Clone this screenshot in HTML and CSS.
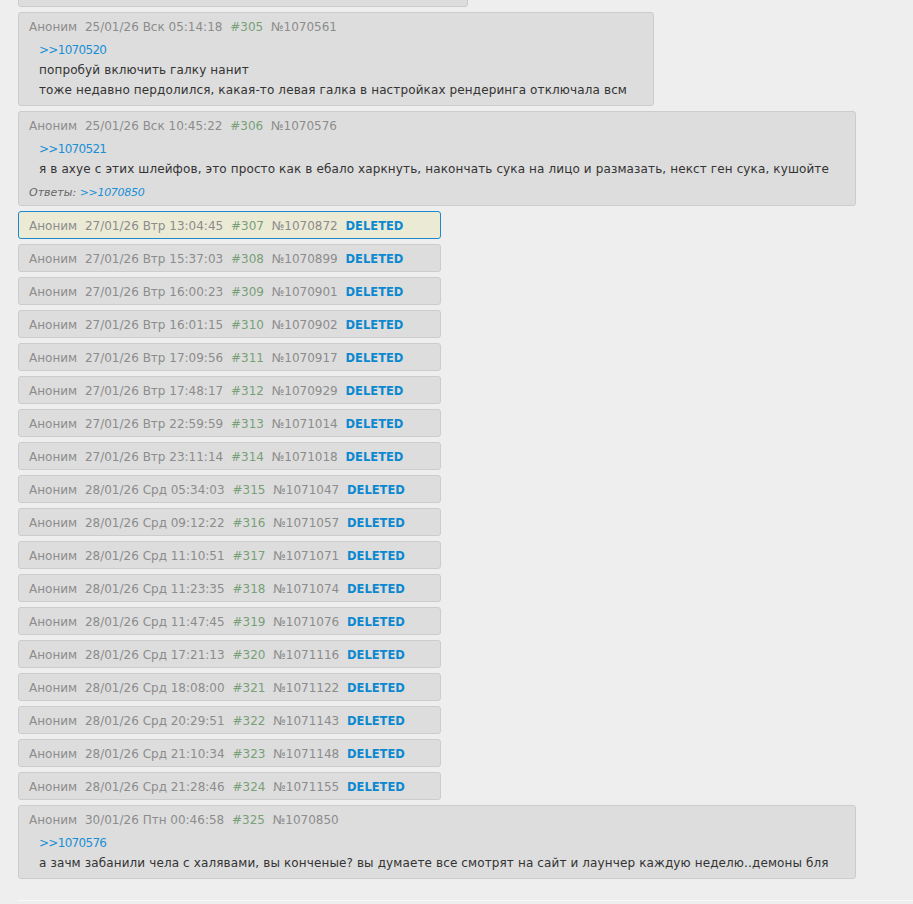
FILE: index.html
```html
<!DOCTYPE html>
<html lang="ru">
<head>
<meta charset="utf-8">
<title>Тред</title>
<link rel="stylesheet" href="styles.css">
</head>
<body>
<div class="thread">
  <div class="post post--prev">
    <div class="post__details"><span class="post__anon">Аноним</span></div>
  </div>

  <div class="post">
    <div class="post__details">
      <span class="post__anon">Аноним</span>
      <span class="post__time">25/01/26 Вск 05:14:18</span>
      <span class="post__reflink">#305</span>
      <span class="post__num">№1070561</span>
    </div>
    <div class="post__message">
      <a class="post__reply" href="#1070520">&gt;&gt;1070520</a><br>
      попробуй включить галку нанит<br>
      тоже недавно пердолился, какая-то левая галка в настройках рендеринга отключала всм
    </div>
  </div>

  <div class="post">
    <div class="post__details">
      <span class="post__anon">Аноним</span>
      <span class="post__time">25/01/26 Вск 10:45:22</span>
      <span class="post__reflink">#306</span>
      <span class="post__num">№1070576</span>
    </div>
    <div class="post__message">
      <a class="post__reply" href="#1070521">&gt;&gt;1070521</a><br>
      я в ахуе с этих шлейфов, это просто как в ебало харкнуть, накончать сука на лицо и размазать, некст ген сука, кушойте
    </div>
    <div class="post__refmap">Ответы: <a class="post__refmap-link" href="#1070850">&gt;&gt;1070850</a></div>
  </div>

  <div class="post post--deleted post--highlight">
    <div class="post__details">
      <span class="post__anon">Аноним</span>
      <span class="post__time">27/01/26 Втр 13:04:45</span>
      <span class="post__reflink">#307</span>
      <span class="post__num">№1070872</span>
      <span class="post__deleted">DELETED</span>
    </div>
  </div>
  <div class="post post--deleted">
    <div class="post__details"><span class="post__anon">Аноним</span> <span class="post__time">27/01/26 Втр 15:37:03</span> <span class="post__reflink">#308</span> <span class="post__num">№1070899</span> <span class="post__deleted">DELETED</span></div>
  </div>
  <div class="post post--deleted">
    <div class="post__details"><span class="post__anon">Аноним</span> <span class="post__time">27/01/26 Втр 16:00:23</span> <span class="post__reflink">#309</span> <span class="post__num">№1070901</span> <span class="post__deleted">DELETED</span></div>
  </div>
  <div class="post post--deleted">
    <div class="post__details"><span class="post__anon">Аноним</span> <span class="post__time">27/01/26 Втр 16:01:15</span> <span class="post__reflink">#310</span> <span class="post__num">№1070902</span> <span class="post__deleted">DELETED</span></div>
  </div>
  <div class="post post--deleted">
    <div class="post__details"><span class="post__anon">Аноним</span> <span class="post__time">27/01/26 Втр 17:09:56</span> <span class="post__reflink">#311</span> <span class="post__num">№1070917</span> <span class="post__deleted">DELETED</span></div>
  </div>
  <div class="post post--deleted">
    <div class="post__details"><span class="post__anon">Аноним</span> <span class="post__time">27/01/26 Втр 17:48:17</span> <span class="post__reflink">#312</span> <span class="post__num">№1070929</span> <span class="post__deleted">DELETED</span></div>
  </div>
  <div class="post post--deleted">
    <div class="post__details"><span class="post__anon">Аноним</span> <span class="post__time">27/01/26 Втр 22:59:59</span> <span class="post__reflink">#313</span> <span class="post__num">№1071014</span> <span class="post__deleted">DELETED</span></div>
  </div>
  <div class="post post--deleted">
    <div class="post__details"><span class="post__anon">Аноним</span> <span class="post__time">27/01/26 Втр 23:11:14</span> <span class="post__reflink">#314</span> <span class="post__num">№1071018</span> <span class="post__deleted">DELETED</span></div>
  </div>
  <div class="post post--deleted">
    <div class="post__details"><span class="post__anon">Аноним</span> <span class="post__time">28/01/26 Срд 05:34:03</span> <span class="post__reflink">#315</span> <span class="post__num">№1071047</span> <span class="post__deleted">DELETED</span></div>
  </div>
  <div class="post post--deleted">
    <div class="post__details"><span class="post__anon">Аноним</span> <span class="post__time">28/01/26 Срд 09:12:22</span> <span class="post__reflink">#316</span> <span class="post__num">№1071057</span> <span class="post__deleted">DELETED</span></div>
  </div>
  <div class="post post--deleted">
    <div class="post__details"><span class="post__anon">Аноним</span> <span class="post__time">28/01/26 Срд 11:10:51</span> <span class="post__reflink">#317</span> <span class="post__num">№1071071</span> <span class="post__deleted">DELETED</span></div>
  </div>
  <div class="post post--deleted">
    <div class="post__details"><span class="post__anon">Аноним</span> <span class="post__time">28/01/26 Срд 11:23:35</span> <span class="post__reflink">#318</span> <span class="post__num">№1071074</span> <span class="post__deleted">DELETED</span></div>
  </div>
  <div class="post post--deleted">
    <div class="post__details"><span class="post__anon">Аноним</span> <span class="post__time">28/01/26 Срд 11:47:45</span> <span class="post__reflink">#319</span> <span class="post__num">№1071076</span> <span class="post__deleted">DELETED</span></div>
  </div>
  <div class="post post--deleted">
    <div class="post__details"><span class="post__anon">Аноним</span> <span class="post__time">28/01/26 Срд 17:21:13</span> <span class="post__reflink">#320</span> <span class="post__num">№1071116</span> <span class="post__deleted">DELETED</span></div>
  </div>
  <div class="post post--deleted">
    <div class="post__details"><span class="post__anon">Аноним</span> <span class="post__time">28/01/26 Срд 18:08:00</span> <span class="post__reflink">#321</span> <span class="post__num">№1071122</span> <span class="post__deleted">DELETED</span></div>
  </div>
  <div class="post post--deleted">
    <div class="post__details"><span class="post__anon">Аноним</span> <span class="post__time">28/01/26 Срд 20:29:51</span> <span class="post__reflink">#322</span> <span class="post__num">№1071143</span> <span class="post__deleted">DELETED</span></div>
  </div>
  <div class="post post--deleted">
    <div class="post__details"><span class="post__anon">Аноним</span> <span class="post__time">28/01/26 Срд 21:10:34</span> <span class="post__reflink">#323</span> <span class="post__num">№1071148</span> <span class="post__deleted">DELETED</span></div>
  </div>
  <div class="post post--deleted">
    <div class="post__details"><span class="post__anon">Аноним</span> <span class="post__time">28/01/26 Срд 21:28:46</span> <span class="post__reflink">#324</span> <span class="post__num">№1071155</span> <span class="post__deleted">DELETED</span></div>
  </div>

  <div class="post">
    <div class="post__details">
      <span class="post__anon">Аноним</span>
      <span class="post__time">30/01/26 Птн 00:46:58</span>
      <span class="post__reflink">#325</span>
      <span class="post__num">№1070850</span>
    </div>
    <div class="post__message">
      <a class="post__reply" href="#1070576">&gt;&gt;1070576</a><br>
      а зачм забанили чела с халявами, вы конченые? вы думаете все смотрят на сайт и лаунчер каждую неделю..демоны бля
    </div>
  </div>
</div>
<hr class="thread-end">
</body>
</html>
```
FILE: styles.css
```css
html, body {
  margin: 0;
  padding: 0;
  background: #eeeeee;
}

body {
  font-family: "DejaVu Sans", Verdana, sans-serif;
  font-size: 12px;
  color: #333333;
}

a {
  text-decoration: none;
}

.thread {
  display: flex;
  flex-direction: column;
  align-items: flex-start;
  gap: 5px;
  padding-left: 18px;
}

.post {
  box-sizing: border-box;
  background: #dddddd;
  border: 1px solid #cccccc;
  border-radius: 3px;
  padding: 4px 26px 2px 10px;
}

/* previous post, scrolled mostly out of view */
.post--prev {
  width: 450px;
  margin-top: -21px;
}
.post--prev .post__details span {
  visibility: hidden;
}

.post--deleted {
  width: 423px;
}

.post--highlight {
  background: #ebead5;
  border-color: #1c89cc;
}

.post__details {
  line-height: 20px;
  font-size: 12px;
  color: #8c8c8c;
  white-space: nowrap;
}

.post__details span + span {
  margin-left: 4px;
}

.post__reflink {
  color: #789f78;
}

.post__deleted {
  color: #0b88cf;
  font-weight: bold;
  font-size: 11.5px;
}

.post__message {
  margin: 3px 0 0 10px;
  padding-bottom: 3px;
  line-height: 20px;
  letter-spacing: 0.12px;
  white-space: nowrap;
}

.post__reply {
  color: #1a8fd6;
  letter-spacing: -0.7px;
}

.post__refmap {
  margin-top: 1px;
  line-height: 20px;
  font-size: 11px;
  font-style: italic;
  color: #666666;
}

.post__refmap-link {
  color: #1a8fd6;
  letter-spacing: -0.3px;
}

.thread-end {
  margin: 21px 0 0 18px;
  border: 0;
  border-top: 1px solid #f9f9f9;
  height: 0;
}
```
